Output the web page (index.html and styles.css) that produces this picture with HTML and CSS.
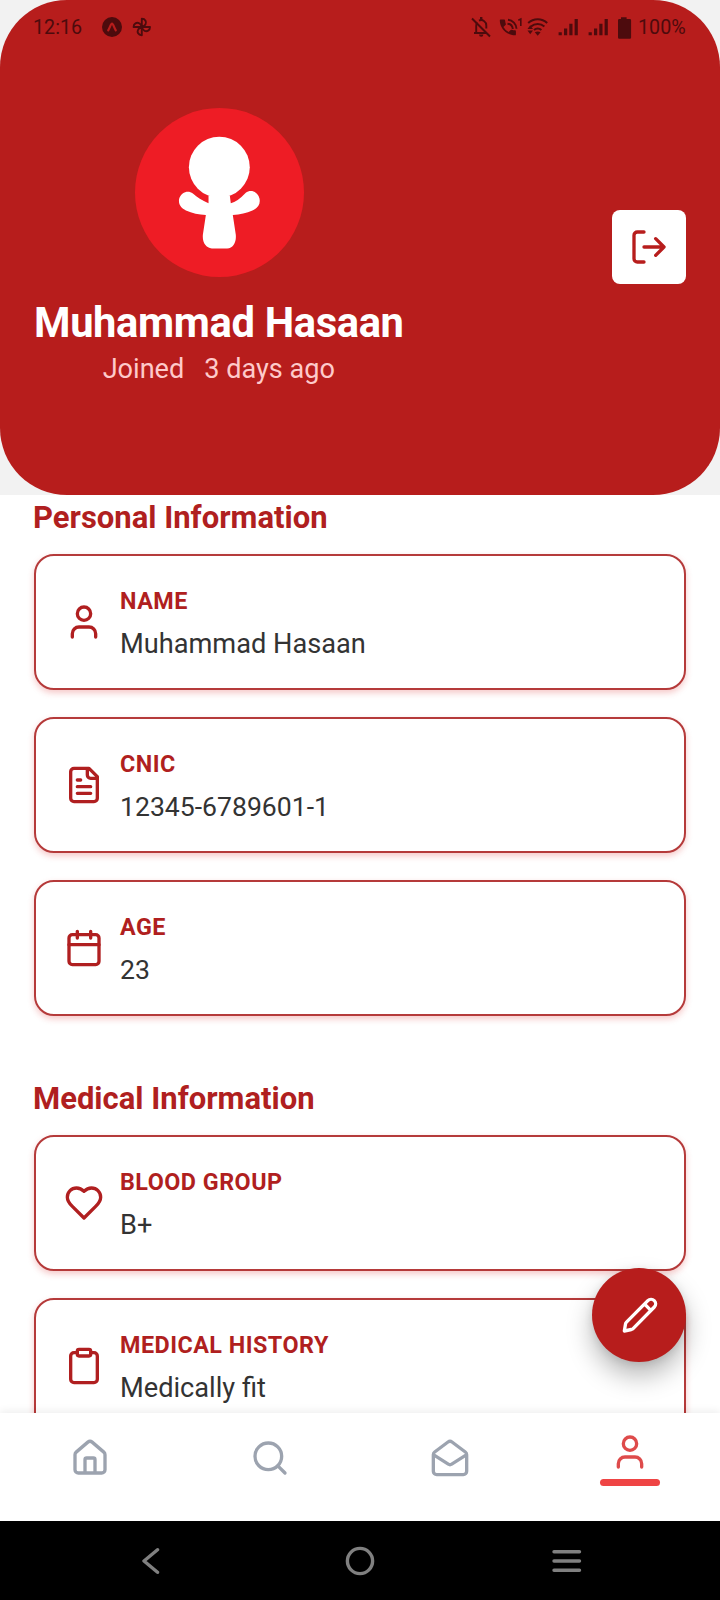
FILE: index.html
```html
<!DOCTYPE html>
<html lang="en">
<head>
<meta charset="utf-8">
<title>Profile</title>
<link rel="stylesheet" href="styles.css">
</head>
<body>
<div class="screen">
  <div class="header-wrap">
    <header class="header">
      <div class="status">
        <span class="clock">12:16</span>
        <svg class="st-left" width="50" height="20" viewBox="0 0 50 20">
          <circle cx="10" cy="10" r="10" fill="currentColor"/>
          <path d="M6.200 13.400C8 10.500 8.800 6.600 10 6.600S12 10.500 13.800 13.400" fill="none" stroke="#b71d1c" stroke-width="2.200" stroke-linecap="round"/>
          <g fill="none" stroke="currentColor" stroke-width="1.900" stroke-linejoin="round">
            <path d="M39.800 10V1.800C43.600 1.800 44.600 5 43.600 7.200C43 8.800 41.500 9.400 39.800 10Z"/>
            <path d="M39.800 10H48C48 13.800 44.800 14.800 42.600 13.800C41 13.200 40.400 11.700 39.800 10Z"/>
            <path d="M39.800 10V18.200C36 18.200 35 15 36 12.800C36.600 11.200 38.100 10.600 39.800 10Z"/>
            <path d="M39.800 10H31.600C31.600 6.200 34.800 5.200 37 6.200C38.600 6.800 39.200 8.300 39.800 10Z"/>
          </g>
        </svg>
        <svg class="st-right" width="162" height="24" viewBox="0 0 162 24">
          <g fill="none" stroke="currentColor" stroke-width="1.900">
            <path d="M1 3.500 19 21.500"/>
            <path d="M5.200 17.500V11C5.200 9.500 5.600 8.200 6.200 7.400M8 5.600C11.500 4 15.300 6.500 15.300 10.500V13.500M3 18H15"/>
          </g>
          <path d="M9 2h2.400v3H9ZM8 19.500h4.400a2.200 2.200 0 0 1-4.400 0Z" fill="currentColor"/>
          <path d="M29.600 4.600h3.600q.8 0 .9.800.1 1.800.7 3.400.2.600-.3 1.100l-2.100 2q1.900 3.300 5.200 5l2.100-2q.5-.4 1.100-.2 1.600.5 3.300.6.800.1.800.9v3.200q0 .9-.9.900C35.500 20 28.900 13.500 28.800 5.500q0-.9.800-.9Z" fill="currentColor"/>
          <g fill="none" stroke="currentColor" stroke-width="1.900">
            <path d="M36.500 8.700a5.800 5.800 0 0 1 5.300 5.300M37 4.700a9.500 9.500 0 0 1 8.500 9"/>
            <path d="M47.300 5.200 49.800 4v7" stroke-width="1.600"/>
            <path d="M57.200 8a13.800 13.800 0 0 1 19 0M60 11.600a10 10 0 0 1 13.400 0M63 15a5.600 5.600 0 0 1 7.400 0" stroke-width="2"/>
          </g>
          <path d="m63.800 17.300 2.900 3.500 2.900-3.500q-2.900-1.500-5.800 0ZM56.500 14l2.700-3.800L62 14ZM56.500 15.500l2.700 3.800L62 15.500Z" fill="currentColor"/>
          <path d="M87.600 17.200h3.200v3h-3.200ZM93 13.400h3.200v6.800H93ZM98.300 8.800h3.200v11.400h-3.200ZM103.600 4h3.200v16.200h-3.200ZM117.600 17.200h3.200v3h-3.200ZM123 13.400h3.200v6.800H123ZM128.300 8.800h3.200v11.400h-3.200ZM133.600 4h3.200v16.200h-3.200Z" fill="currentColor"/>
          <path d="M150 2.200h5.600v1.900h3.200q1.300 0 1.300 1.300v17q0 1.300-1.300 1.300h-10.500q-1.300 0-1.300-1.300v-17q0-1.300 1.300-1.300h1.700Z" fill="currentColor"/>
        </svg>
        <span class="pct">100%</span>
      </div>
      <div class="profile">
        <div class="identity">
          <svg class="avatar" viewBox="45 53 508 508">
            <circle cx="299" cy="307" r="254" fill="#ee1c25"/>
            <circle cx="298.500" cy="231" r="91.500" fill="#fff"/>
            <path d="M266 316V339C246 331 232 322 219 310C204 299 184 307 178 325C174 342 183 354 198 361Q226 373 258 375L249 434C247 457 258 474 276 475H322C340 474 350 457 348 434L339 375Q372 372 398 361C415 353 423 341 419 324C414 304 392 297 378 308Q352 336 333 339L330 316Z" fill="#fff"/>
          </svg>
          <h1 class="name">Muhammad Hasaan</h1>
          <p class="joined"><span>Joined</span><span>3 days ago</span></p>
        </div>
        <div class="logout">
          <svg class="icon" viewBox="0 0 24 24"><path d="M9 21H5a2 2 0 0 1-2-2V5a2 2 0 0 1 2-2h4M16 17l5-5-5-5M21 12H9"/></svg>
        </div>
      </div>
    </header>
  </div>
  <main class="content">
    <section class="group">
      <h2 class="title">Personal Information</h2>
      <div class="card">
        <svg class="icon" viewBox="0 0 24 24"><circle cx="12" cy="7" r="4"/><path d="M19 21v-2a4 4 0 0 0-4-4H9a4 4 0 0 0-4 4v2"/></svg>
        <div class="info"><div class="label">NAME</div><div class="value">Muhammad Hasaan</div></div>
      </div>
      <div class="card">
        <svg class="icon" viewBox="0 0 24 24"><path d="M15 2H6a2 2 0 0 0-2 2v16a2 2 0 0 0 2 2h12a2 2 0 0 0 2-2V7ZM14 2v4a2 2 0 0 0 2 2h4M10 9H8M16 13H8M16 17H8"/></svg>
        <div class="info"><div class="label">CNIC</div><div class="value digits">12345-6789601-1</div></div>
      </div>
      <div class="card">
        <svg class="icon" viewBox="0 0 24 24"><rect x="3" y="4" width="18" height="18" rx="2"/><path d="M8 2v4M16 2v4M3 10h18"/></svg>
        <div class="info"><div class="label">AGE</div><div class="value digits">23</div></div>
      </div>
    </section>
    <section class="group">
      <h2 class="title">Medical Information</h2>
      <div class="card">
        <svg class="icon" viewBox="0 0 24 24"><path d="M19 14c1.490-1.460 3-3.210 3-5.500A5.500 5.500 0 0 0 16.500 3c-1.760 0-3 .5-4.500 2-1.500-1.500-2.740-2-4.500-2A5.500 5.500 0 0 0 2 8.500c0 2.300 1.500 4.050 3 5.500l7 7Z"/></svg>
        <div class="info"><div class="label">BLOOD GROUP</div><div class="value">B+</div></div>
      </div>
      <div class="card">
        <svg class="icon" viewBox="0 0 24 24"><rect x="8" y="2" width="8" height="4" rx="1"/><path d="M16 4h2a2 2 0 0 1 2 2v14a2 2 0 0 1-2 2H6a2 2 0 0 1-2-2V6a2 2 0 0 1 2-2h2"/></svg>
        <div class="info"><div class="label">MEDICAL HISTORY</div><div class="value">Medically fit</div></div>
      </div>
    </section>
    <div class="fab">
      <svg class="icon" viewBox="0 0 24 24"><path d="M16.700 3.400a2.700 2.700 0 0 1 3.900 3.800L8 20q-.5.500-1.200.7L2.600 21.600l.7-4.200q.1-.6.600-1.100ZM14.800 5.500l3.700 3.700"/></svg>
    </div>
  </main>
  <nav class="tabs">
    <div class="tab"><svg class="icon" viewBox="0 0 24 24"><path d="M3 10a2 2 0 0 1 .709-1.528l7-5.999a2 2 0 0 1 2.582 0l7 5.999A2 2 0 0 1 21 10v9a2 2 0 0 1-2 2H5a2 2 0 0 1-2-2ZM15 21v-8a1 1 0 0 0-1-1h-4a1 1 0 0 0-1 1v8"/></svg></div>
    <div class="tab"><svg class="icon" viewBox="0 0 24 24"><circle cx="11" cy="11" r="8"/><path d="m21 21-4.300-4.300"/></svg></div>
    <div class="tab"><svg class="icon" viewBox="0 0 24 24"><path d="M21.200 8.400c.5.380.8.970.8 1.600v10a2 2 0 0 1-2 2H4a2 2 0 0 1-2-2V10a2 2 0 0 1 .8-1.600l8-6a2 2 0 0 1 2.400 0ZM22 10l-8.970 5.700a1.940 1.940 0 0 1-2.060 0L2 10"/></svg></div>
    <div class="tab active"><svg class="icon" viewBox="0 0 24 24"><circle cx="12" cy="7" r="4"/><path d="M19 21v-2a4 4 0 0 0-4-4H9a4 4 0 0 0-4 4v2"/></svg><span class="bar"></span></div>
  </nav>
  <div class="sysnav">
    <svg width="18" height="28" viewBox="0 0 18 28"><path d="M15.500 2.700 2 14l13.500 11.300"/></svg>
    <svg class="sys-home" width="30" height="30" viewBox="0 0 30 30"><circle cx="15" cy="15" r="12.600"/></svg>
    <svg width="30" height="28" viewBox="0 0 30 28"><path d="M2 4.700h25.500M2 14h25.500M2 23.300h25.500"/></svg>
  </div>
</div>
</body>
</html>
```

FILE: styles.css
```css
* { box-sizing: border-box; margin: 0; padding: 0; }

body {
  background: #fff;
  font-family: Roboto, "Liberation Sans", sans-serif;
}

svg { display: block; flex: none; }

.screen {
  width: 720px;
  height: 1600px;
  display: flex;
  flex-direction: column;
  overflow: hidden;
}

.header-wrap { background: #f2f2f2; flex: none; }

.header {
  height: 495px;
  border-radius: 67px;
  background: #b71d1c;
}

.status {
  height: 54px;
  padding: 0 34px 0 33px;
  display: flex;
  align-items: center;
  color: #4d0b0d;
  font-size: 19.7px;
  line-height: 24px;
}

.clock { width: 69px; padding-top: 2px; }
.st-right { margin-left: auto; }
.pct { width: 48px; margin-left: 5px; padding-top: 2px; }

.profile {
  padding: 54px 34px 0;
  display: flex;
  justify-content: space-between;
  align-items: flex-start;
}

.identity {
  display: flex;
  flex-direction: column;
  align-items: center;
}

.avatar { width: 169px; height: 169px; margin-left: 2px; }

.name {
  margin-top: 21px;
  font-size: 41.67px;
  line-height: 50px;
  letter-spacing: -0.34px;
  font-weight: 700;
  color: #fff;
  white-space: nowrap;
}

.joined {
  margin-top: 3px;
  display: flex;
  gap: 20px;
  font-size: 27.1px;
  line-height: 36px;
  color: #fecaca;
}

.logout {
  width: 74px;
  height: 74px;
  margin-top: 102px;
  border-radius: 8px;
  background: #fff;
  color: #b71d1c;
  display: flex;
  align-items: center;
  justify-content: center;
}

.icon {
  width: 40px;
  height: 40px;
  fill: none;
  stroke: currentColor;
  stroke-width: 2;
  stroke-linecap: round;
  stroke-linejoin: round;
}

.content {
  position: relative;
  flex: none;
  height: 918px;
  padding: 5px 34px 0;
  overflow: hidden;
}

.group { margin-bottom: 65px; }

.title {
  margin: 0 0 18px -1px;
  font-size: 31px;
  line-height: 36px;
  font-weight: 700;
  color: #b01f20;
}

.card {
  height: 136px;
  margin-bottom: 27px;
  padding-left: 27.5px;
  display: flex;
  align-items: center;
  gap: 16.5px;
  border: 2px solid #b53a3a;
  border-radius: 20px;
  background: #fff;
  color: #b01f20;
  box-shadow: 0 3px 6px rgba(220, 38, 38, 0.25);
}

.card:last-child { margin-bottom: 0; }

.info { padding-top: 5px; }

.label {
  font-size: 23.33px;
  line-height: 32px;
  letter-spacing: 0.48px;
  font-weight: 700;
}

.value {
  margin-top: 7px;
  font-size: 27.2px;
  line-height: 40px;
  color: #333;
}

.value.digits { font-size: 26.6px; }

.fab {
  position: absolute;
  right: 34px;
  top: 773px;
  width: 94px;
  height: 94px;
  border-radius: 50%;
  background: #b71d1c;
  color: #fff;
  display: flex;
  align-items: center;
  justify-content: center;
  box-shadow: 0 14px 26px rgba(0, 0, 0, 0.28), 0 2px 8px rgba(0, 0, 0, 0.1);
}

.fab .icon { margin-left: 2px; }

.tabs {
  position: relative;
  flex: none;
  height: 108px;
  display: flex;
  background: #fff;
  color: #9ca3af;
  box-shadow: 0 -2px 8px rgba(0, 0, 0, 0.07);
}

.tab {
  flex: 1;
  padding-top: 25px;
  display: flex;
  flex-direction: column;
  align-items: center;
}

.tab.active { padding-top: 19px; color: #de4b4b; }

.bar {
  width: 60px;
  height: 7px;
  margin-top: 7px;
  border-radius: 4px;
  background: #ef4444;
}

.sysnav {
  position: relative;
  flex: 1;
  background: #000;
  padding: 0 138px 0 142px;
  display: flex;
  justify-content: space-between;
  align-items: center;
}

.sysnav svg {
  fill: none;
  stroke: #808080;
  stroke-width: 3.4;
  stroke-linecap: round;
  stroke-linejoin: round;
}

.sysnav .sys-home { margin-left: 7px; }
```
